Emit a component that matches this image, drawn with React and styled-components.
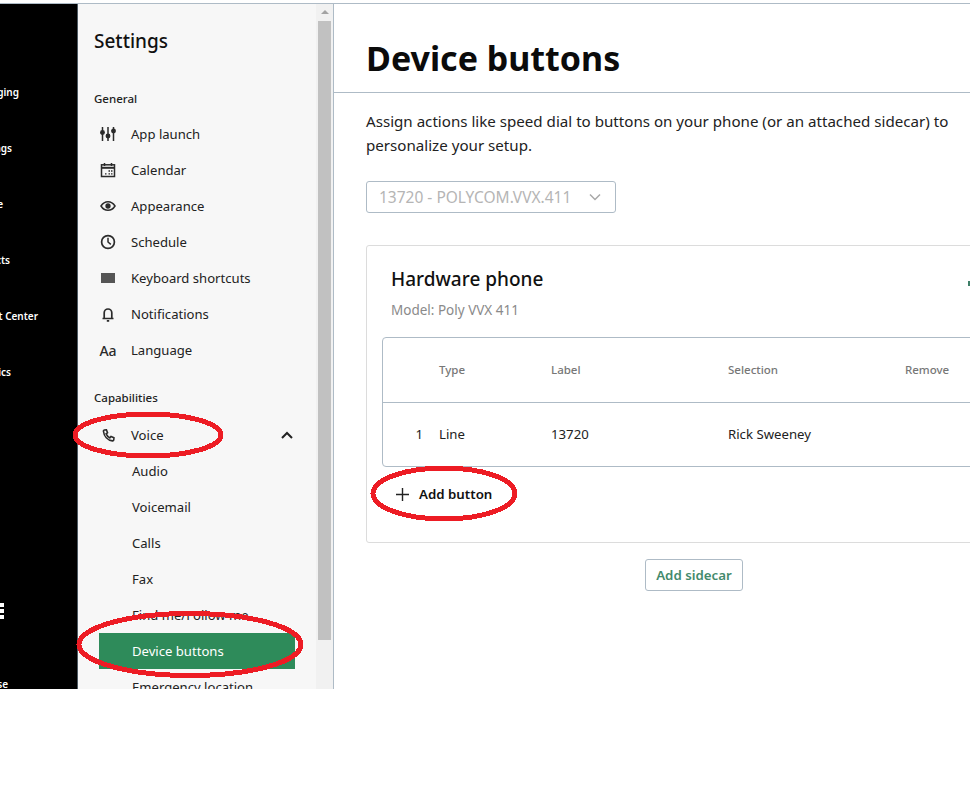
import React from 'react';
import styled, {createGlobalStyle} from 'styled-components';

const GlobalStyle = createGlobalStyle`
  html, body {
    margin: 0;
    padding: 0;
    background: #fff;
    font-family: "Noto Sans", "Open Sans", sans-serif;
    color: #111;
  }
  * { box-sizing: border-box; }
`;

const Page = styled.div`
  position: relative;
  width: 970px;
  height: 791px;
  padding-top: 3px;
  overflow: hidden;
`;

const Frame = styled.div`
  display: flex;
  height: 686px;
  border-top: 1px solid #aebbc6;
  overflow: hidden;
`;

const Rail = styled.nav`
  flex: none;
  width: 78px;
  background: #000;
  border-right: 1px solid #4d5a63;
  padding-top: 80px;
  display: flex;
  flex-direction: column;
  overflow: hidden;
`;

const RailItem = styled.div`
  flex: none;
  display: flex;
  justify-content: flex-end;
  align-items: center;
  width: ${p => p.$end}px;
  height: 16px;
  margin-bottom: 40px;
  white-space: nowrap;
  color: #fff;
  font-size: 10px;
  font-weight: 600;
`;

const RailMenu = styled.div`
  flex: none;
  display: flex;
  flex-direction: column;
  gap: 2px;
  width: 4px;
  margin-top: 183px;
`;

const RailBar = styled.span`
  height: 4px;
  background: #fff;
`;

const RailClose = styled(RailItem)`
  margin-top: 57px;
  margin-bottom: 0;
`;

const Panel = styled.aside`
  flex: none;
  width: 238px;
  background: #f7f7f7;
  padding-top: 23px;
  overflow: hidden;
`;

const PanelTitle = styled.div`
  margin-left: 16px;
  font-size: 19px;
  line-height: 28px;
  font-weight: 500;
  color: #111;
`;

const SectionLabel = styled.div`
  margin: ${p => p.$top}px 0 ${p => p.$bottom}px 16px;
  font-size: 11.5px;
  line-height: 20px;
  font-weight: 500;
  color: #222;
`;

const Row = styled.div`
  display: flex;
  align-items: center;
  height: 36px;
  width: 215px;
  padding-left: 22px;
  font-size: 13.1px;
  color: #222;
`;

const RowIcon = styled.span`
  flex: none;
  display: flex;
  align-items: center;
  justify-content: center;
  width: 16px;
  margin-right: 15px;
  color: #2b2b2b;
  font-size: 14px;
  font-weight: 500;
`;

const RowChevron = styled.span`
  display: flex;
  margin-left: auto;
  color: #222;
`;

const SubRow = styled.div`
  display: flex;
  align-items: center;
  height: 36px;
  width: 196px;
  margin-left: 21px;
  padding-left: 33px;
  font-size: 13.1px;
  white-space: nowrap;
  color: ${p => (p.$active ? '#fff' : '#222')};
  background: ${p => (p.$active ? '#2e8b5a' : 'transparent')};
  clip-path: ${p => (p.$cut ? 'inset(0 0 13px 0)' : 'none')};
`;

const Scrollbar = styled.div`
  flex: none;
  width: 17px;
  background: #f1f1f1;
  display: flex;
  flex-direction: column;
  align-items: center;
  padding-top: 6px;
`;

const ScrollArrow = styled.span`
  width: 0;
  height: 0;
  border-left: 4px solid transparent;
  border-right: 4px solid transparent;
  border-bottom: 4px solid #a3a3a3;
`;

const ScrollThumb = styled.span`
  width: 13px;
  height: 619px;
  margin-top: 7px;
  background: #c1c1c1;
`;

const Main = styled.main`
  flex: none;
  width: 720px;
  border-left: 1px solid #aebbc6;
  background: #fff;
`;

const Header = styled.header`
  height: 89px;
  padding: 31px 32px 0;
  border-bottom: 1px solid #aebbc6;
`;

const Title = styled.h1`
  margin: 0;
  font-size: 34px;
  line-height: 46px;
  font-weight: 700;
  color: #0b0b0b;
`;

const Content = styled.div`
  padding: 16px 32px 0;
`;

const Intro = styled.p`
  margin: 0 0 24px;
  width: 600px;
  font-size: 15.13px;
  line-height: 24px;
  color: #222;
`;

const Select = styled.div`
  display: flex;
  align-items: center;
  justify-content: space-between;
  width: 250px;
  height: 32px;
  padding: 0 14px 0 12px;
  border: 1px solid #aebbc6;
  border-radius: 3px;
  color: #b5b5b5;
  font-size: 15.5px;
`;

const Card = styled.section`
  width: 656px;
  height: 298px;
  margin-top: 32px;
  padding: 19px 15px 0;
  border: 1px solid #dcdcdc;
  border-radius: 3px;
`;

const CardHead = styled.div`
  display: flex;
  justify-content: space-between;
  align-items: center;
  padding-left: 9px;
`;

const CardTitle = styled.h2`
  margin: 0;
  font-size: 19px;
  line-height: 28px;
  font-weight: 500;
  color: #111;
`;

const CardMark = styled.span`
  width: 2px;
  height: 5px;
  margin: 8px 36px 0 0;
  background: #3f7f68;
`;

const Model = styled.div`
  margin: 7px 0 17px 9px;
  font-size: 13.5px;
  line-height: 20px;
  color: #8a8a8a;
`;

const Table = styled.div`
  border: 1px solid #aebbc6;
  border-radius: 4px;
  width: 624px;
`;

const TableRow = styled.div`
  display: grid;
  grid-template-columns: 56px 112px 177px 177px 1fr;
  align-items: center;
  height: ${p => p.$height}px;
  padding-bottom: 2px;
  border-bottom: ${p => (p.$head ? '1px solid #aebbc6' : 'none')};
  font-size: ${p => (p.$head ? '11.5px' : '13.2px')};
  font-weight: ${p => (p.$head ? 500 : 400)};
  color: ${p => (p.$head ? '#777' : '#222')};
`;

const IndexCell = styled.span`
  padding-right: 16px;
  text-align: right;
`;

const AddButton = styled.button`
  display: flex;
  align-items: center;
  gap: 10px;
  height: 28px;
  margin: 13px 0 0 14px;
  padding: 0;
  border: 0;
  background: none;
  font: inherit;
  font-size: 13.3px;
  font-weight: 600;
  color: #111;
`;

const SidecarWrap = styled.div`
  display: flex;
  justify-content: center;
  width: 656px;
  margin-top: 16px;
`;

const SidecarButton = styled.button`
  width: 98px;
  height: 32px;
  padding: 0;
  border: 1px solid #aebbc6;
  border-radius: 3px;
  background: #fff;
  font: inherit;
  font-size: 13.3px;
  font-weight: 600;
  color: #438a6c;
`;

const Annotations = styled.svg`
  position: absolute;
  left: 0;
  top: 0;
  pointer-events: none;
`;

const Icon = ({children, size = 16}) => (
  <svg width={size} height={size} viewBox="0 0 16 16" fill="none" stroke="currentColor" strokeWidth="1.5">
    {children}
  </svg>
);

const generalItems = [
  {
    label: 'App launch',
    icon: (
      <Icon>
        <path d="M2.500 1v14M8 1v14M13.500 1v14" />
        <circle cx="2.500" cy="6.500" r="1.700" fill="#2b2b2b" />
        <circle cx="8" cy="10" r="1.700" fill="#2b2b2b" />
        <circle cx="13.500" cy="5" r="1.700" fill="#2b2b2b" />
      </Icon>
    )
  },
  {
    label: 'Calendar',
    icon: (
      <Icon>
        <rect x="1.500" y="2.800" width="13" height="11.700" />
        <path d="M1.500 5.800h13" strokeWidth="2" />
        <path d="M4.500 1v3M11.500 1v3" />
        <path d="M8.500 9h1.500M11 9h1.500M5 11.800h1.500M8.500 11.800h1.500M11 11.800h1.500" strokeWidth="1.300" />
      </Icon>
    )
  },
  {
    label: 'Appearance',
    icon: (
      <Icon>
        <path d="M1 8c1.800-2.900 4.100-4.300 7-4.300s5.200 1.400 7 4.300c-1.800 2.900-4.100 4.300-7 4.300S2.800 10.900 1 8z" />
        <circle cx="8" cy="8" r="1.900" fill="currentColor" />
      </Icon>
    )
  },
  {
    label: 'Schedule',
    icon: (
      <Icon>
        <circle cx="8" cy="8" r="6.400" strokeWidth="1.700" />
        <path d="M8 3.800V8l2.800 2.300" />
      </Icon>
    )
  },
  {
    label: 'Keyboard shortcuts',
    icon: (
      <Icon>
        <rect x="1" y="3" width="14" height="10" fill="#555" stroke="none" />
      </Icon>
    )
  },
  {
    label: 'Notifications',
    icon: (
      <Icon>
        <path d="M2.500 12.500h11M4.200 12.500V6.800a3.800 3.800 0 0 1 7.600 0v5.700M6.800 14.800h2.400" strokeWidth="1.700" />
      </Icon>
    )
  },
  {label: 'Language', icon: 'Aa'}
];

const voiceItems = ['Audio', 'Voicemail', 'Calls', 'Fax'];

const App = () => (
  <Page>
    <GlobalStyle />
    <Frame>
      <Rail>
        <RailItem $end={19}>Messaging</RailItem>
        <RailItem $end={12}>Settings</RailItem>
        <RailItem $end={3}>Phone</RailItem>
        <RailItem $end={10}>Contacts</RailItem>
        <RailItem $end={38}>Contact Center</RailItem>
        <RailItem $end={11}>Analytics</RailItem>
        <RailMenu>
          <RailBar />
          <RailBar />
          <RailBar />
        </RailMenu>
        <RailClose $end={8}>Close</RailClose>
      </Rail>
      <Panel>
        <PanelTitle>Settings</PanelTitle>
        <SectionLabel $top={34} $bottom={7}>General</SectionLabel>
        {generalItems.map(item => (
          <Row key={item.label}>
            <RowIcon>{item.icon}</RowIcon>
            {item.label}
          </Row>
        ))}
        <SectionLabel $top={20} $bottom={9}>Capabilities</SectionLabel>
        <Row>
          <RowIcon>
            <Icon size={13}>
              <path d="M3 1.200 5.400 1 6.800 4.500 5.100 5.900c.9 2 2.400 3.700 4.500 5l1.500-1.600 3.600 1.600-.3 2.800c-.2.700-.8 1-1.500.9C6.800 13.700 2.400 9 1.800 2.800c-.1-.7.500-1.500 1.200-1.600z" strokeWidth="2" />
            </Icon>
          </RowIcon>
          Voice
          <RowChevron>
            <svg width="12" height="8" viewBox="0 0 12 8" fill="none" stroke="currentColor" strokeWidth="2">
              <path d="M1 7l5-5 5 5" />
            </svg>
          </RowChevron>
        </Row>
        {voiceItems.map(label => <SubRow key={label}>{label}</SubRow>)}
        <SubRow $cut>Find me/Follow me</SubRow>
        <SubRow $active>Device buttons</SubRow>
        <SubRow>Emergency location</SubRow>
      </Panel>
      <Scrollbar>
        <ScrollArrow />
        <ScrollThumb />
      </Scrollbar>
      <Main>
        <Header>
          <Title>Device buttons</Title>
        </Header>
        <Content>
          <Intro>
            Assign actions like speed dial to buttons on your phone (or an attached sidecar) to personalize your setup.
          </Intro>
          <Select>
            13720 - POLYCOM.VVX.411
            <svg width="12" height="8" viewBox="0 0 12 8" fill="none" stroke="#a8a8a8" strokeWidth="1.500">
              <path d="M1 1.500l5 5 5-5" />
            </svg>
          </Select>
          <Card>
            <CardHead>
              <CardTitle>Hardware phone</CardTitle>
              <CardMark />
            </CardHead>
            <Model>Model: Poly VVX 411</Model>
            <Table>
              <TableRow $head $height={65}>
                <span />
                <span>Type</span>
                <span>Label</span>
                <span>Selection</span>
                <span>Remove</span>
              </TableRow>
              <TableRow $height={63}>
                <IndexCell>1</IndexCell>
                <span>Line</span>
                <span>13720</span>
                <span>Rick Sweeney</span>
                <span />
              </TableRow>
            </Table>
            <AddButton>
              <svg width="13" height="13" viewBox="0 0 13 13" stroke="#222" strokeWidth="1.400">
                <path d="M6.500 0v13M0 6.500h13" />
              </svg>
              Add button
            </AddButton>
          </Card>
          <SidecarWrap>
            <SidecarButton>Add sidecar</SidecarButton>
          </SidecarWrap>
        </Content>
      </Main>
    </Frame>
    <Annotations width="970" height="791" fill="none" stroke="#ed1c24" strokeWidth="5" shapeRendering="crispEdges">
      <ellipse cx="148" cy="435" rx="73" ry="21" />
      <ellipse cx="444" cy="493.500" rx="71" ry="25.500" />
      <ellipse cx="190" cy="644.500" rx="111" ry="31" />
    </Annotations>
  </Page>
);

export default App;
